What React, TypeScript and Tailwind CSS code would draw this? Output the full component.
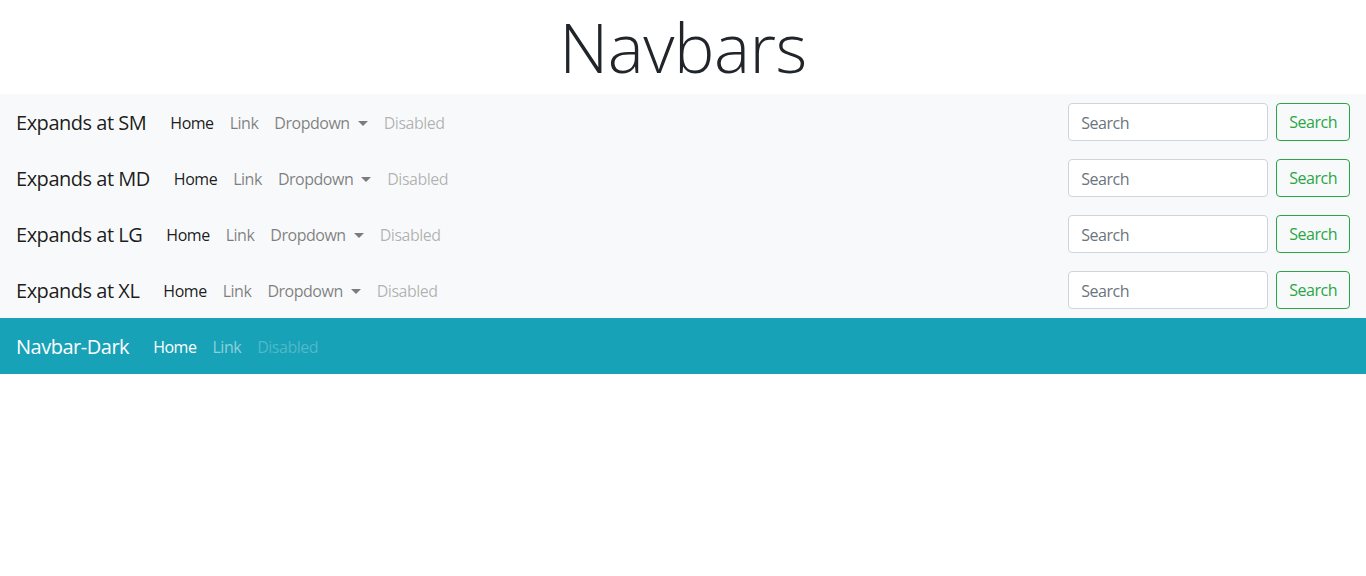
const font = { fontFamily: '"Open Sans", "Noto Sans", sans-serif' };

function Caret() {
	return (
		<span className="ml-[8px] inline-block border-x-[5px] border-t-[5px] border-x-transparent border-t-current" />
	);
}

function LightNav({ brand }: { brand: string }) {
	return (
		<nav className="flex h-[56px] items-center bg-[#f8f9fa] px-4">
			<a className="mr-4 pt-[2px] text-[20px] text-black/90">{brand}</a>
			<ul className="flex items-center pt-[2px] text-[16px]">
				<li className="px-2 text-black/90">Home</li>
				<li className="px-2 text-black/50">Link</li>
				<li className="flex items-center px-2 text-black/50">
					Dropdown
					<Caret />
				</li>
				<li className="px-2 text-black/30">Disabled</li>
			</ul>
			<form className="ml-auto flex items-center">
				<input
					type="text"
					placeholder="Search"
					className="mr-2 h-[38px] w-[200px] rounded-[4px] border border-[#ced4da] bg-white px-3 pt-[1px] text-[16px] tracking-[-0.03em] text-[#495057] placeholder:text-[#6c757d] outline-none"
				/>
				<button
					type="button"
					className="h-[38px] rounded-[4px] border border-[#28a745] px-3 text-[16px] text-[#28a745]"
				>
					Search
				</button>
			</form>
		</nav>
	);
}

export default function App() {
	return (
		<div style={font} className="min-h-[576px] bg-white tracking-[-0.03em]">
			<div className="flex h-[94px] items-center justify-center">
				<h1 className="text-[68px] font-light leading-[1.2] text-[#212529]">Navbars</h1>
			</div>
			<LightNav brand="Expands at SM" />
			<LightNav brand="Expands at MD" />
			<LightNav brand="Expands at LG" />
			<LightNav brand="Expands at XL" />
			<nav className="flex h-[56px] items-center bg-[#17a2b8] px-4">
				<a className="mr-4 pt-[2px] text-[20px] text-white">Navbar-Dark</a>
				<ul className="flex items-center pt-[2px] text-[16px]">
					<li className="px-2 text-white">Home</li>
					<li className="px-2 text-white/50">Link</li>
					<li className="px-2 text-white/25">Disabled</li>
				</ul>
			</nav>
		</div>
	);
}
